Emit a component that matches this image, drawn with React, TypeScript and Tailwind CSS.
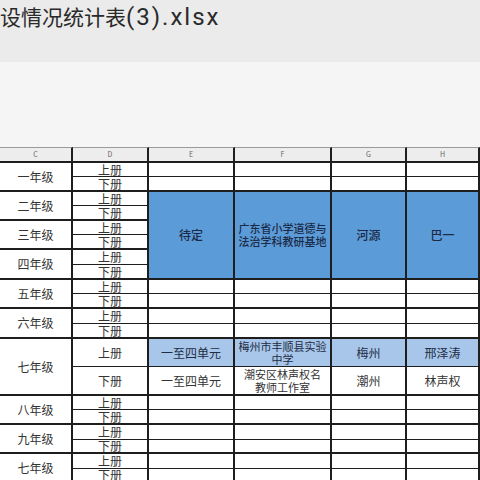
import React from "react";

const grades = ["一年级", "二年级", "三年级", "四年级", "五年级", "六年级", "七年级", "八年级", "九年级", "七年级"];

const line = "border-[#1e1e1e]";

export default function App() {
  const cells: React.ReactNode[] = [];

  grades.forEach((grade, g) => {
    [0, 1].forEach((s) => {
      const key = `${g}-${s}`;
      if (s === 0) {
        cells.push(
          <div key={`c${key}`} className={`row-span-2 flex items-center justify-center border-r-2 border-b-2 ${line} bg-white text-[12px] leading-[14px] text-[#333]`}>
            {grade}
          </div>
        );
      }
      cells.push(
        <div
          key={`d${key}`}
          className={`flex items-center justify-center border-r-2 ${s === 0 ? "border-b" : "border-b-2"} ${line} bg-white text-[12px] leading-[12px] text-[#333]`}
        >
          {s === 0 ? "上册" : "下册"}
        </div>
      );

      // merged blue block: 二年级 .. 四年级
      if (g >= 1 && g <= 3) {
        if (g === 1 && s === 0) {
          cells.push(
            <div key="e-blue" className={`row-span-6 flex items-center justify-center border-r-2 border-b-2 ${line} bg-[#5b9bd8] text-[12px] font-medium text-[#1b2a46]`}>
              待定
            </div>,
            <div key="f-blue" className={`row-span-6 flex flex-col items-center justify-center whitespace-nowrap border-r-2 border-b-2 ${line} bg-[#5b9bd8] text-[11px] font-medium leading-[13px] text-[#1b2a46]`}>
              <span>广东省小学道德与</span>
              <span>法治学科教研基地</span>
            </div>,
            <div key="g-blue" className={`row-span-6 flex items-center justify-center border-r-2 border-b-2 ${line} bg-[#5b9bd8] text-[12px] font-medium text-[#1b2a46]`}>
              河源
            </div>,
            <div key="h-blue" className={`row-span-6 flex items-center justify-center border-r-2 border-b-2 ${line} bg-[#5b9bd8] text-[12px] font-medium text-[#1b2a46]`}>
              巴一
            </div>
          );
        }
        return;
      }

      if (g === 6) {
        const row =
          s === 0
            ? ["一至四单元", ["梅州市丰顺县实验", "中学"], "梅州", "邢泽涛"]
            : ["一至四单元", ["潮安区林声权名", "教师工作室"], "潮州", "林声权"];
        row.forEach((txt, i) => {
          cells.push(
            <div
              key={`x${key}-${i}`}
              className={`flex flex-col items-center justify-center whitespace-nowrap border-r-2 ${s === 0 ? "border-b bg-[#a7c6ea] text-[#1f2c44]" : "border-b-2 bg-white text-[#333]"} ${line} text-center text-[11px] leading-[13px]`}
            >
              {Array.isArray(txt) ? (
                <>
                  <span>{txt[0]}</span>
                  <span>{txt[1]}</span>
                </>
              ) : (
                <span className="text-[12px]">{txt}</span>
              )}
            </div>
          );
        });
        return;
      }

      [0, 1, 2, 3].forEach((i) => {
        cells.push(
          <div key={`x${key}-${i}`} className={`border-r-2 ${s === 0 ? "border-b" : "border-b-2"} ${line} bg-white`} />
        );
      });
    });
  });

  return (
    <div className="h-[480px] w-[480px] overflow-hidden bg-[#f5f5f5] font-['Roboto','Noto_Sans_CJK_SC',sans-serif]">
      {/* title bar */}
      <div className="h-[62px] bg-[#ebebeb] pt-[3px]">
        <div className="whitespace-nowrap text-[21px] leading-[28px] text-[#2a2a2a]">
          设情况统计表<span className="text-[24px] tracking-[2px]">(3).xlsx</span>
        </div>
      </div>

      {/* empty toolbar area */}
      <div className="h-[85px]" />

      {/* sheet */}
      <div className="grid grid-cols-[73px_76px_86px_97px_75px_73px] grid-rows-[16px_14px_15px_14px_15px_14px_15px_15px_15px_14px_15px_15px_15px_28px_29px_14px_15px_15px_14px_15px_14px] font-['Noto_Sans_CJK_SC',sans-serif]">
        {["C", "D", "E", "F", "G", "H"].map((h) => (
          <div
            key={h}
            className={`flex items-center justify-center border-t border-t-[#9a9a9a] border-r-2 border-b-2 ${line} bg-[#ededed] text-[7px] text-[#666]`}
          >
            {h}
          </div>
        ))}
        {cells}
      </div>
    </div>
  );
}
